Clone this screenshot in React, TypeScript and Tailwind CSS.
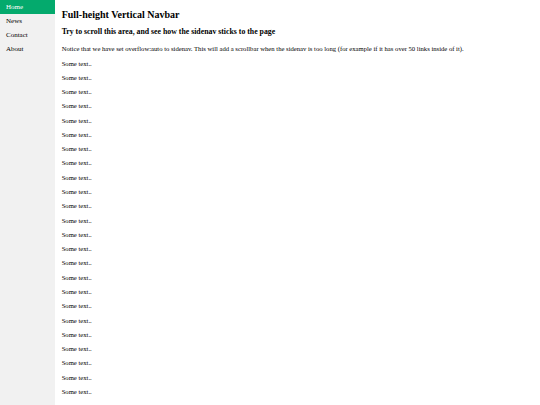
const links = ["Home", "News", "Contact", "About"]

export default function App() {
  const lines = Array.from({ length: 24 }, (_, i) => i)

  return (
    <div className="flex bg-white font-['Liberation_Serif',serif] text-[6.65px] leading-[1.15] text-black">
      <nav className="sticky top-0 h-screen w-[55px] shrink-0 overflow-auto bg-[#f1f1f1]">
        {links.map((link, i) => (
          <a
            key={link}
            href="#"
            className={
              i === 0
                ? "block h-[14px] bg-[#04AA6D] px-[6px] pt-[3px] text-[7px] text-white"
                : "block h-[14px] px-[6px] pt-[3px] text-[7px] text-black"
            }
          >
            {link}
          </a>
        ))}
      </nav>

      <div className="flex-1 px-[6.65px] pt-[0.4px]">
        <h2 className="my-[8.3px] text-[10px] font-bold leading-[1.15]">
          Full-height Vertical Navbar
        </h2>
        <h3 className="my-[7.8px] text-[7.8px] font-bold leading-[1.15]">
          Try to scroll this area, and see how the sidenav sticks to the page
        </h3>
        <p className="my-[6.65px]">
          Notice that we have set overflow:auto to sidenav. This will add a
          scrollbar when the sidenav is too long (for example if it has over 50
          links inside of it).
        </p>
        {lines.map((i) => (
          <p key={i} className="my-[6.65px]">
            Some text..
          </p>
        ))}
      </div>
    </div>
  )
}
